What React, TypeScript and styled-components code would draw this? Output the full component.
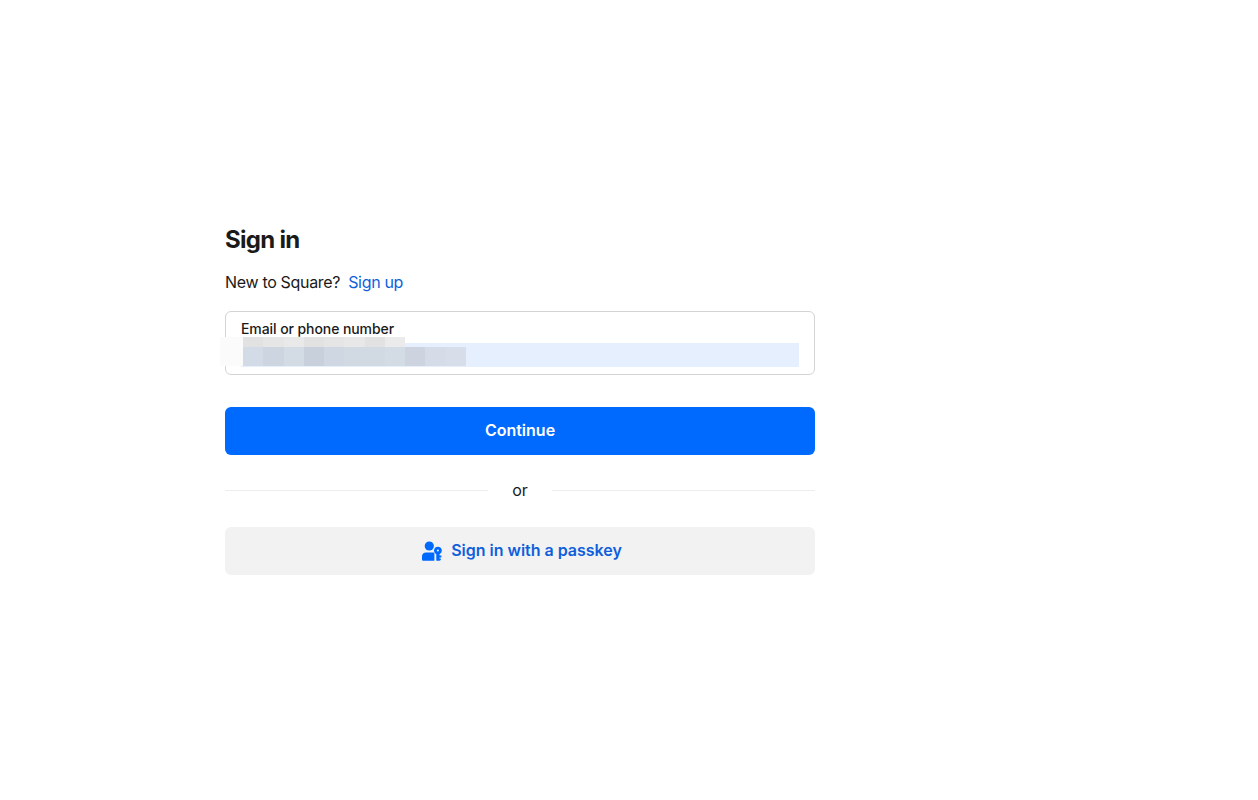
import React from "react";
import styled, { createGlobalStyle } from "styled-components";

const Global = createGlobalStyle`
  html, body { margin: 0; padding: 0; background: #fff; }
  body { font-family: Inter, "Liberation Sans", sans-serif; color: #1a1a1a; }
`;
const Page = styled.main`
  width: 1258px; height: 800px; box-sizing: border-box; padding: 225px 0 0 225px;
`;
const Form = styled.div`width: 590px; display: flex; flex-direction: column;`;
const Title = styled.h1`
  margin: 0; font-size: 24px; line-height: 30px; font-weight: 700; letter-spacing: -0.7px; color: #1a1a1a;
`;
const Prompt = styled.p`
  margin: 15px 0 0; font-size: 16px; line-height: 24px; letter-spacing: -0.32px; color: #1a1a1a; display: flex; gap: 8px;
`;
const Link = styled.a`color: #0f5fdc; text-decoration: none;`;
const Field = styled.div`
  position: relative; margin-top: 17px; height: 64px; box-sizing: border-box;
  border: 1px solid #d4d4d4; border-radius: 6px; padding: 8px 15px 0;
`;
const Label = styled.label`
  display: block; font-size: 14px; line-height: 17px; font-weight: 500; letter-spacing: -0.08px; color: #1a1a1a;
`;
const Autofill = styled.div`
  position: absolute; left: 15px; right: 15px; top: 31px; height: 24px; background: #e5effd;
`;
const Mosaic = styled.svg`position: absolute; left: -6px; top: 25px; display: block;`;
const Primary = styled.button`
  margin-top: 32px; height: 48px; border: 0; border-radius: 6px; background: #006aff; color: #fff; padding: 0 0 2px;
  font: 600 16px/24px Inter, "Liberation Sans", sans-serif;
`;
const Divider = styled.div`
  margin-top: 23px; height: 24px; display: flex; align-items: center; gap: 24px;
  font-size: 16px; line-height: 24px; color: #1a1a1a;
`;
const Rule = styled.span`flex: 1; height: 1px; background: #eeeeee;`;
const Secondary = styled.button`
  margin-top: 25px; height: 48px; border: 0; border-radius: 6px; background: #f2f2f2; color: #0f5fdc; padding: 0 0 2px 4px;
  font: 600 16px/24px Inter, "Liberation Sans", sans-serif; letter-spacing: -0.02px;
  display: flex; align-items: center; justify-content: center; gap: 9px;
`;
const PasskeyIcon = styled.svg`margin-top: 2px; flex: none;`;

const top = ["#e2e2e2","#e6e6e6","#e9e9e9","#e2e2e2","#e5e5e5","#e8e8e8","#e2e2e2","#ebebeb"];
const bottom = ["#d3dbe6","#cdd5e0","#d3dbe5","#c8d0db","#cfd7e2","#d1d9e3","#d1d9e3","#d3dbe5","#ced4df","#d6dce7","#d8dee9"];

export default function App() {
  return (
    <Page>
      <Global />
      <Form>
        <Title>Sign in</Title>
        <Prompt>New to Square? <Link href="#">Sign up</Link></Prompt>
        <Field>
          <Label>Email or phone number</Label>
          <Autofill />
          <Mosaic width="246" height="30" viewBox="0 0 246 30" shapeRendering="crispEdges">
            <rect x="0" y="0" width="23" height="29" fill="#fbfbfb" />
            {top.map((c, i) => <rect key={i} x={23 + i * 20.25} y="0" width="20.25" height="10" fill={c} />)}
            {bottom.map((c, i) => <rect key={i} x={23 + i * 20.27} y="10" width="20.27" height="19" fill={c} />)}
          </Mosaic>
        </Field>
        <Primary>Continue</Primary>
        <Divider><Rule />or<Rule /></Divider>
        <Secondary>
          <PasskeyIcon width="20" height="20" viewBox="0 0 20 20" fill="#006aff">
            <circle cx="7.3" cy="5" r="4.6" />
            <path d="M0 15.4C0 13.2 1.8 11.5 4 11.5H10.5C11.2 11.5 11.8 11.6 12.4 11.9V19.7H1.3C.6 19.7 0 19.1 0 18.4Z" />
            <path fillRule="evenodd" d="M15.9 5.7a3.9 3.9 0 0 1 1.6 7.45V14.6H19.4V16.4H17.5V17.4H18.8V19L17.5 19.8H14.3V13.15A3.9 3.9 0 0 1 15.9 5.7ZM15.9 8.4a1 1 0 1 0 0 2 1 1 0 0 0 0-2Z" />
          </PasskeyIcon>
          Sign in with a passkey
        </Secondary>
      </Form>
    </Page>
  );
}
